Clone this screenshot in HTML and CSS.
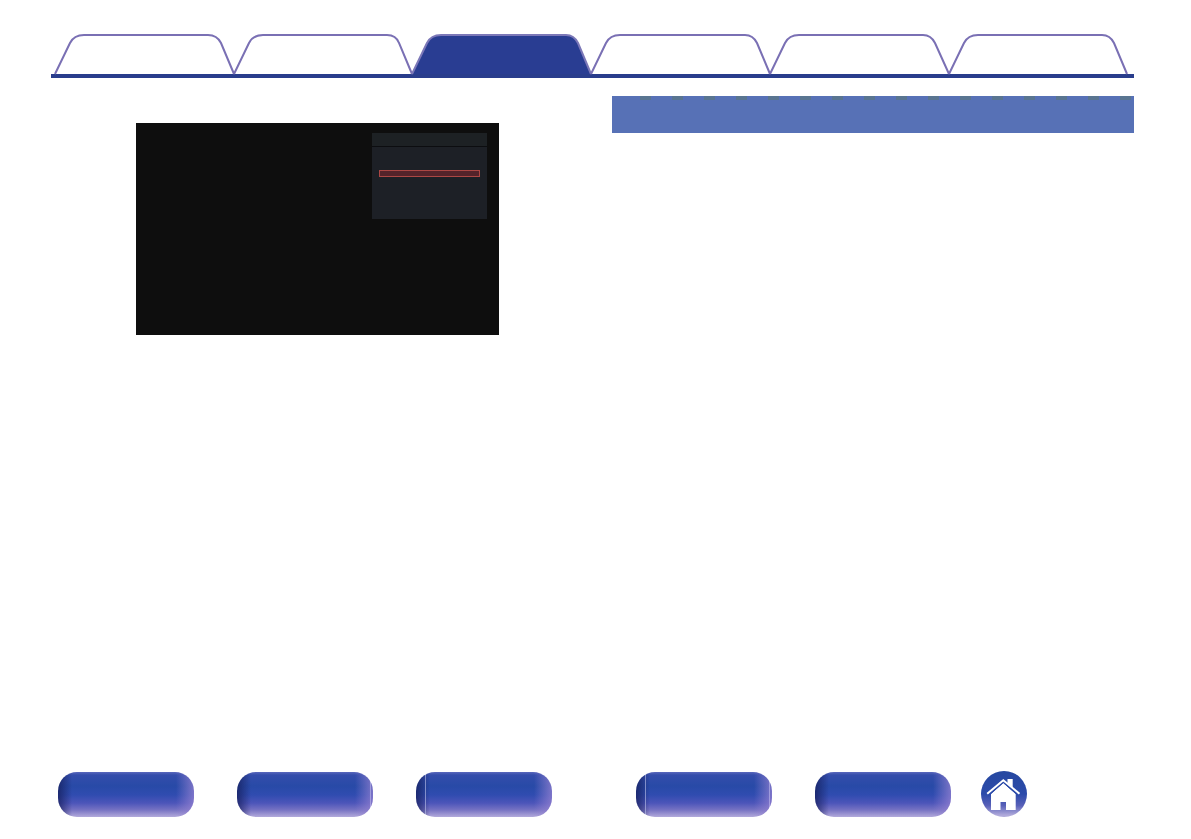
FILE: index.html
```html
<!DOCTYPE html>
<html lang="en">
<head>
    <meta charset="UTF-8">
    <meta name="viewport" content="width=device-width, initial-scale=1.0">
    <title>Owner's Manual</title>

    <link rel="stylesheet" href="styles.css">
</head>
<body>

<!-- Chapter tabs -->
<nav class="tabs" aria-label="Chapters">
    <a class="tab" href="#contents" aria-label="Contents">
        <svg viewBox="0 0 179 40" preserveAspectRatio="none"><path d="M1 40 L16 9 Q20 1 30 1 H154 Q163 1 167 9 L180 40" /></svg>
    </a>
    <a class="tab" href="#connections" aria-label="Connections">
        <svg viewBox="0 0 179 40" preserveAspectRatio="none"><path d="M1 40 L16 9 Q20 1 30 1 H154 Q163 1 166 9 L179 40" /></svg>
    </a>
    <a class="tab active" href="#playback" aria-label="Playback" aria-current="page">
        <svg viewBox="0 0 179 40" preserveAspectRatio="none"><path d="M0 40 L15 9 Q19 1 29 1 H154 Q162 1 166 9 L179 40" /></svg>
    </a>
    <a class="tab" href="#settings" aria-label="Settings">
        <svg viewBox="0 0 179 40" preserveAspectRatio="none"><path d="M0 40 L15 9 Q19 1 29 1 H154 Q162 1 166 9 L179 40" /></svg>
    </a>
    <a class="tab" href="#tips" aria-label="Tips">
        <svg viewBox="0 0 179 40" preserveAspectRatio="none"><path d="M0 40 L15 9 Q19 1 29 1 H153 Q161 1 165 9 L179 40" /></svg>
    </a>
    <a class="tab" href="#appendix" aria-label="Appendix">
        <svg viewBox="0 0 179 40" preserveAspectRatio="none"><path d="M0 40 L15 9 Q19 1 29 1 H153 Q161 1 165 9 L178 40" /></svg>
    </a>
</nav>

<main class="columns">
    <section class="column">
        <!-- TV screen with the option menu open -->
        <div class="screen">
            <div class="menu">
                <div class="menu-title"></div>
                <div class="menu-selected"></div>
            </div>
        </div>
    </section>

    <section class="column">
        <div class="section-bar"></div>
    </section>
</main>

<!-- Shortcut buttons -->
<footer class="shortcuts">
    <div class="group">
        <button class="pill" aria-label="Front panel"></button>
        <button class="pill seam-right" aria-label="Display"></button>
        <button class="pill seam-left" aria-label="Rear panel"></button>
    </div>
    <div class="group">
        <button class="pill seam-left seam-right" aria-label="Remote"></button>
        <button class="pill" aria-label="Index"></button>
    </div>
    <a class="home" href="#home" aria-label="Home">
        <svg viewBox="0 0 46 46">
            <path d="M26.500 8 H31.700 V17 L26.500 12 Z" />
            <path d="M10 23 L22.300 12 L34.700 23 V39 H25 V31 H19.500 V39 H10 Z" />
            <path class="eave" d="M7 25 L22.300 11.600 L37.700 25" />
            <path class="roof" d="M6.200 22.800 L22.300 9.200 L38.500 22.800" />
        </svg>
    </a>
</footer>

</body>
</html>
```

FILE: styles.css
```css
/* Body and General Styling */
* {
    box-sizing: border-box;
}

body {
    background: #ffffff;
    font-family: "Liberation Sans", Arial, sans-serif;
    display: flex;
    flex-direction: column;
    min-height: 100vh;
    margin: 0;
    padding: 34px 57px 22px 51px;
}

/* Chapter tabs */
.tabs {
    display: flex;
    padding: 0 6px 0 3px;
    border-bottom: 4px solid #293d8c;
}

.tab {
    flex: 1;
    height: 40px;
}

.tab svg {
    display: block;
    width: 100%;
    height: 100%;
    overflow: visible;
}

.tab path {
    fill: #ffffff;
    stroke: #7a70b4;
    stroke-width: 2;
    vector-effect: non-scaling-stroke;
}

.tab.active path {
    fill: #293d92;
    stroke: #7c78b8;
}

/* Two column content */
.columns {
    flex: 1;
    display: grid;
    grid-template-columns: 1fr 1fr;
    gap: 39px;
    padding-top: 18px;
}

/* TV screen */
.screen {
    display: flex;
    justify-content: flex-end;
    align-items: flex-start;
    max-width: 363px;
    aspect-ratio: 363 / 212;
    margin: 27px 0 0 85px;
    padding: 10px 12px;
    background: #0e0e0e;
}

/* Option menu */
.menu {
    width: 34%;
    height: 86px;
    background: #1d2026;
}

.menu-title {
    height: 14px;
    border-bottom: 1px solid #0c0d10;
    background: #1d2124;
}

.menu-selected {
    height: 7px;
    margin: 23px 7px 0;
    border: 1px solid #ac4744;
    background: #54232a;
}

/* Section heading bar */
.section-bar {
    height: 37px;
    background:
        linear-gradient(#5771b6, #5771b6) 0 0 / 20px 4px no-repeat,
        linear-gradient(90deg, #597591 11px, transparent 11px) 28px 0 / 32px 4px repeat-x,
        #5771b6;
}

/* Shortcut buttons */
.shortcuts {
    display: flex;
    align-items: flex-end;
    padding-left: 7px;
}

.group {
    display: flex;
    gap: 43px;
}

.group + .group {
    margin-left: 84px;
}

.pill {
    --left-seam: transparent;
    --right-seam: transparent;
    width: 136px;
    height: 45px;
    border: none;
    border-radius: 19px;
    cursor: pointer;
    background:
        linear-gradient(var(--left-seam), var(--left-seam)) 9px 0 / 1px 100% no-repeat,
        linear-gradient(var(--right-seam), var(--right-seam)) 133px 0 / 1px 100% no-repeat,
        linear-gradient(90deg, rgba(22, 30, 92, 0.75), rgba(30, 50, 130, 0) 14px, rgba(120, 105, 195, 0) 118px, rgba(150, 130, 210, 0.75)),
        linear-gradient(#5a68bc, #344dab 3px, #284aa7 14px, #304cb0 23px, #4c55b9 31px, #7773c3 38px, #b3aadb 45px);
}

.seam-left {
    --left-seam: rgba(190, 195, 235, 0.6);
}

.seam-right {
    --right-seam: rgba(190, 185, 235, 0.6);
}

.home {
    width: 46px;
    height: 46px;
    margin-left: 30px;
    border-radius: 50%;
    background: linear-gradient(#2648a0, #2b4aaa 50%, #5860b8 75%, #b0aadb 96%);
}

.home svg {
    display: block;
    fill: #ffffff;
}

.home .roof {
    fill: none;
    stroke: #ffffff;
    stroke-width: 2;
}

.home .eave {
    fill: none;
    stroke: #2b4aaa;
    stroke-width: 1;
}
```
